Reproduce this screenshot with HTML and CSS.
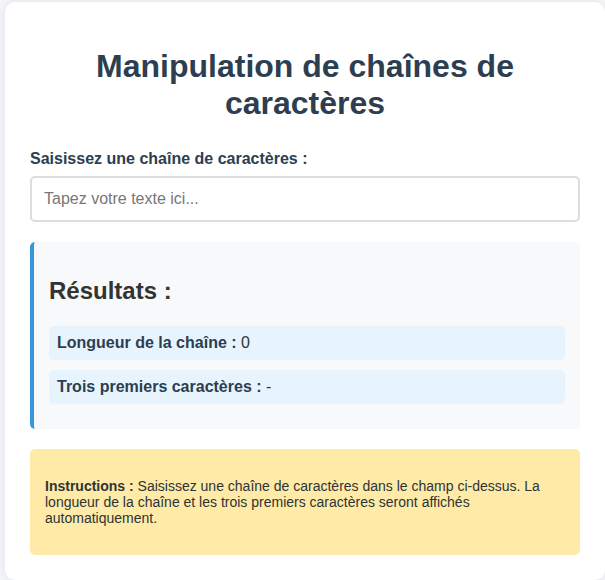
FILE: index.html
```html
<!DOCTYPE html>
<html lang="fr">
<head>
<meta charset="utf-8">
<title>Manipulation de chaînes de caractères</title>
<link rel="stylesheet" href="styles.css">
</head>
<body>
<div class="card">
  <h1 class="title">Manipulation de chaînes de caractères</h1>
  <div class="form-group">
    <label class="label" for="texte">Saisissez une chaîne de caractères :</label>
    <input class="input" id="texte" type="text" placeholder="Tapez votre texte ici...">
  </div>
  <div class="results">
    <h2 class="results-title">Résultats :</h2>
    <div class="result-item"><strong>Longueur de la chaîne :</strong> <span>0</span></div>
    <div class="result-item"><strong>Trois premiers caractères :</strong> <span>-</span></div>
  </div>
  <div class="instructions">
    <p><strong>Instructions :</strong> Saisissez une chaîne de caractères dans le champ ci-dessus. La longueur de la chaîne et les trois premiers caractères seront affichés automatiquement.</p>
  </div>
</div>
</body>
</html>
```

FILE: styles.css
```css
html, body {
  margin: 0;
  padding: 0;
}
body {
  background: #f3f5f8;
  font-family: "Liberation Sans", Arial, sans-serif;
  color: #333;
  padding: 2px 0 2px 5px;
}
.card {
  background: #fff;
  border-radius: 10px;
  box-shadow: 0 0 10px rgba(0, 0, 0, 0.08);
  padding: 25px;
}
.title {
  color: #2c3e50;
  font-size: 32px;
  text-align: center;
  margin: 21px 0 28px;
}
.form-group {
  margin-bottom: 20px;
}
.label {
  display: block;
  font-weight: bold;
  font-size: 16px;
  color: #2c3e50;
  margin-bottom: 8px;
}
.input {
  display: block;
  box-sizing: border-box;
  width: 100%;
  padding: 12px 12px;
  border: 2px solid #ddd;
  border-radius: 5px;
  font-family: "Liberation Sans", Arial, sans-serif;
  font-size: 16px;
  color: #333;
  outline: none;
}
.input::placeholder {
  color: #777;
}
.results {
  background: #f8f9fa;
  border-left: 4px solid #3498db;
  border-radius: 5px;
  padding: 15px;
  margin-bottom: 20px;
}
.results-title {
  font-size: 24px;
  color: #333;
  margin: 20px 0 21px;
}
.result-item {
  background: #e8f4fd;
  border-radius: 5px;
  padding: 8px;
  margin-bottom: 10px;
  font-size: 16px;
  color: #333;
}
.result-item strong {
  color: #2c3e50;
}
.instructions {
  background: #ffeaa7;
  border-radius: 5px;
  padding: 15px;
  font-size: 14px;
  color: #2d3436;
}
.instructions p {
  margin: 14px 0;
}
```
